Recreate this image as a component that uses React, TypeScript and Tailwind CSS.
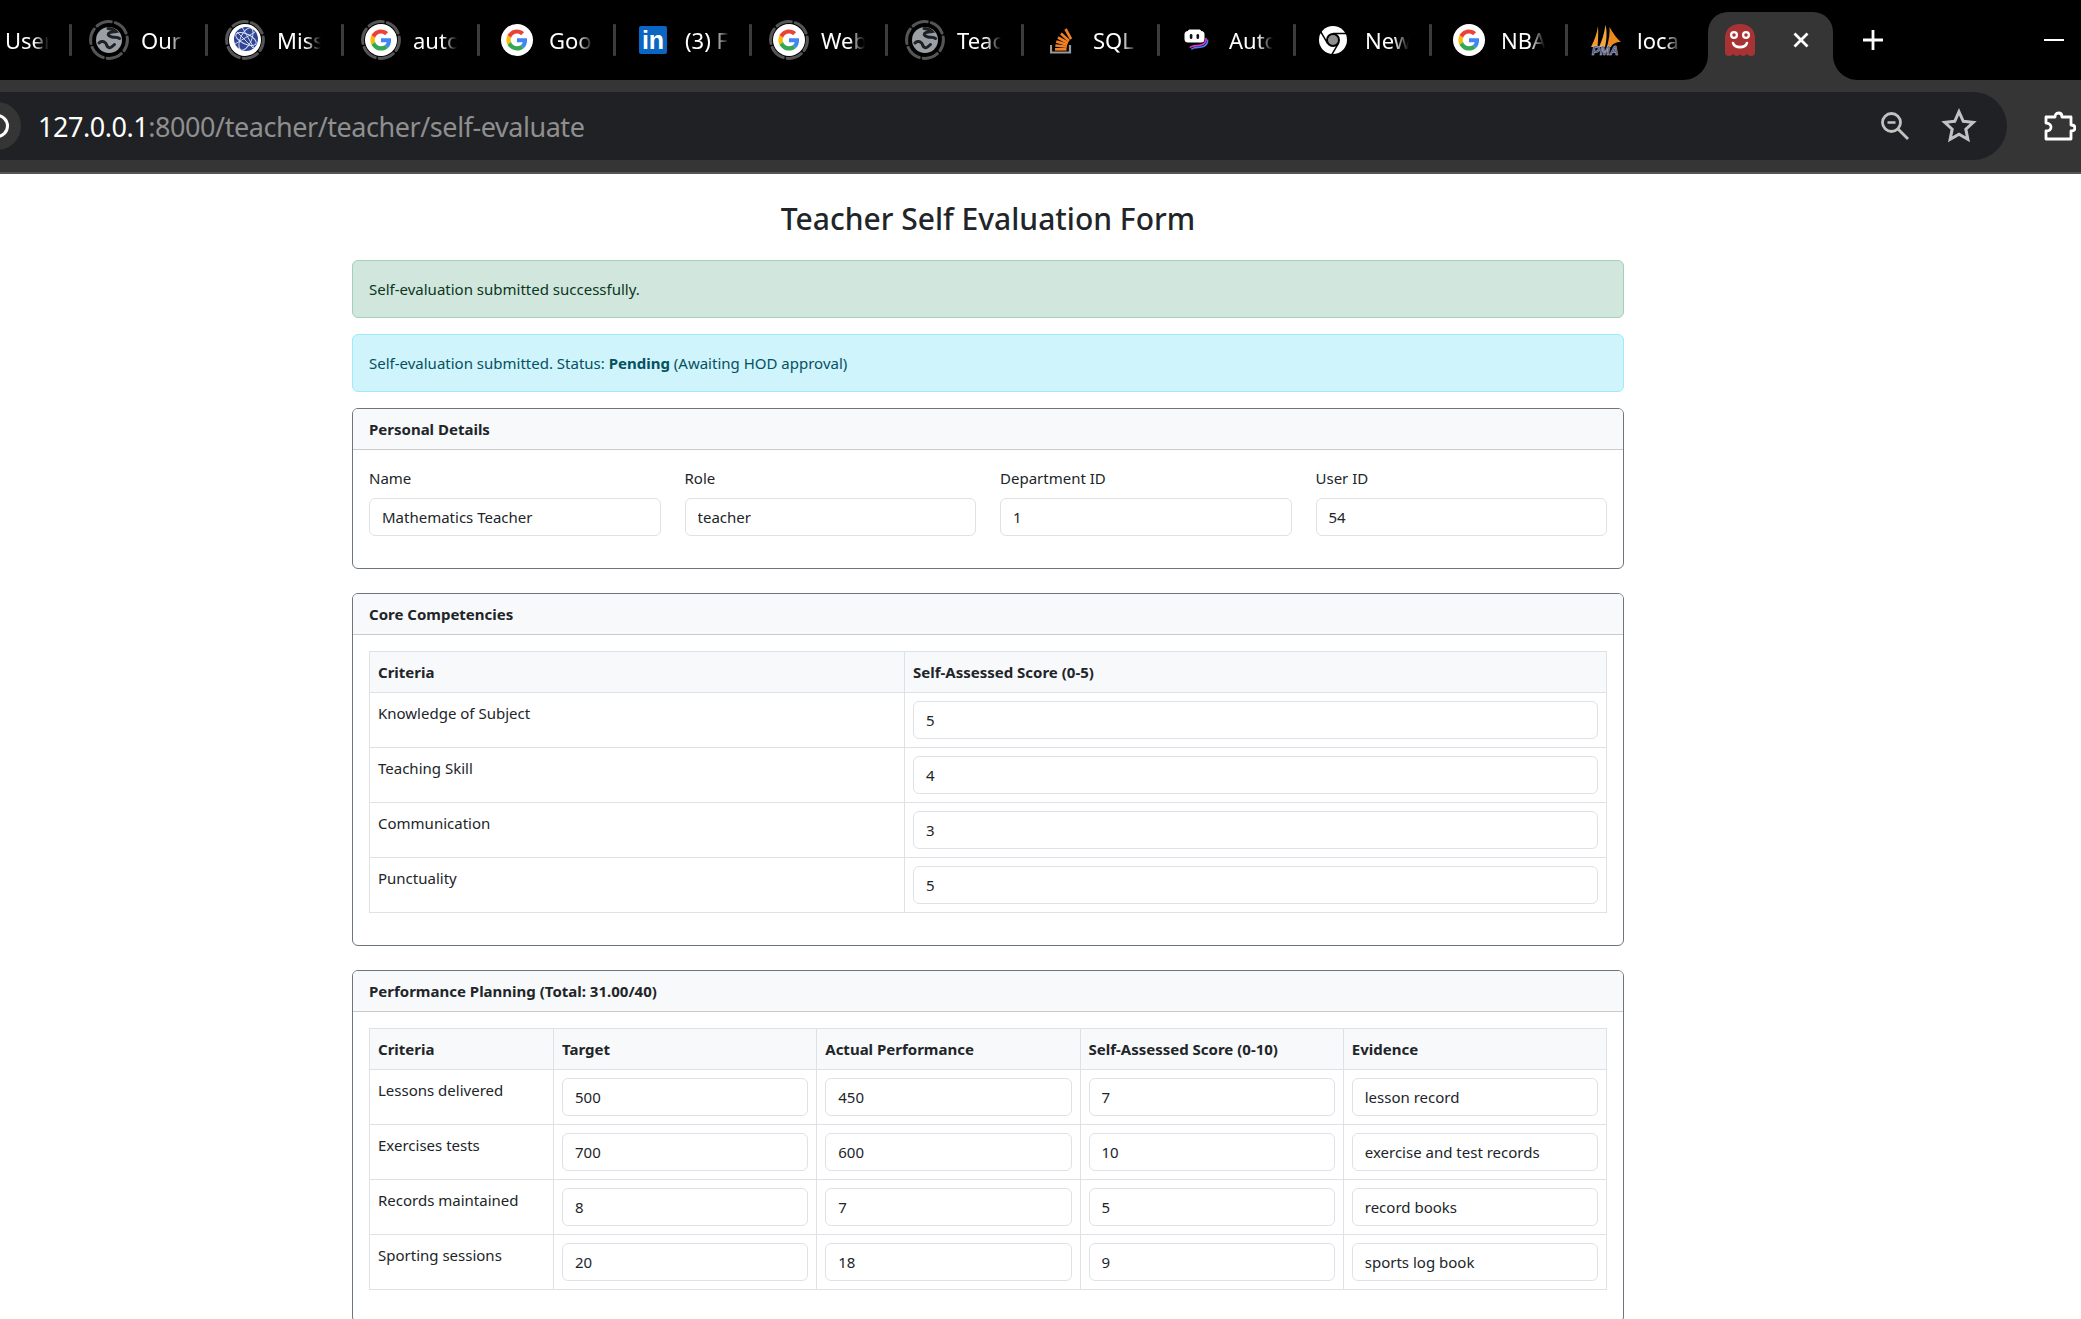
import React from "react";

function GLogo({ size = 32 }: { size?: number }) {
  return (
    <svg width={size} height={size} viewBox="0 0 32 32">
      <circle cx="16" cy="16" r="16" fill="#fff" />
      <g transform="translate(5.4 5.4) scale(0.44)">
        <path fill="#EA4335" d="M24 9.5c3.54 0 6.71 1.22 9.21 3.6l6.85-6.85C35.9 2.38 30.47 0 24 0 14.62 0 6.51 5.38 2.56 13.22l7.98 6.19C12.43 13.72 17.74 9.5 24 9.5z" />
        <path fill="#4285F4" d="M46.98 24.55c0-1.57-.15-3.09-.38-4.55H24v9.02h12.94c-.58 2.96-2.26 5.48-4.78 7.18l7.73 6c4.51-4.18 7.09-10.36 7.09-17.65z" />
        <path fill="#FBBC05" d="M10.53 28.59c-.48-1.45-.76-2.99-.76-4.59s.27-3.14.76-4.59l-7.98-6.19C.92 16.46 0 20.12 0 24c0 3.88.92 7.54 2.56 10.78l7.97-6.19z" />
        <path fill="#34A853" d="M24 48c6.48 0 11.93-2.13 16.09-5.81l-7.73-6c-2.15 1.45-4.92 2.3-8.36 2.3-6.26 0-11.57-4.22-13.47-9.91l-7.98 6.19C6.51 42.62 14.62 48 24 48z" />
      </g>
    </svg>
  );
}

function Ring({ children }: { children: React.ReactNode }) {
  return (
    <div className="relative flex h-10 w-10 items-center justify-center">
      <svg className="absolute inset-0" width="40" height="40" viewBox="0 0 40 40">
        <circle cx="20" cy="20" r="18.4" fill="none" stroke="#555" strokeWidth="3" strokeDasharray="15.3 4" strokeDashoffset="4" strokeLinecap="round" />
      </svg>
      {children}
    </div>
  );
}

function GrayGlobe() {
  return (
    <svg width="26" height="26" viewBox="0 0 26 26">
      <circle cx="13" cy="13" r="13" fill="#9aa0a6" />
      <path d="M12 1.500c3 0 6 1 8 3-2.500.5-6 .5-7.500 2-1 1.500 1 3 3.500 3.500 3 .6 5.500 0 7.500 1.500" fill="none" stroke="#202124" strokeWidth="3" strokeLinecap="round" />
      <path d="M3 16c2-2.500 5-1.500 6.500 0 1.500 1.500 1 3.500 3 4.500 2 1 4-1 6-3" fill="none" stroke="#202124" strokeWidth="3" strokeLinecap="round" />
    </svg>
  );
}

function BlueGlobe() {
  return (
    <svg width="32" height="32" viewBox="0 0 32 32">
      <circle cx="16" cy="16" r="16" fill="#fff" />
      <circle cx="17" cy="15" r="12" fill="#2f4597" />
      <g fill="none" stroke="#fff" strokeWidth="0.9" opacity="0.85">
        <ellipse cx="17" cy="15" rx="5.500" ry="12" transform="rotate(25 17 15)" />
        <ellipse cx="17" cy="15" rx="11" ry="5" transform="rotate(25 17 15)" />
        <path d="M6 20 L26 8 M8 8 L24 24 M13 3 L25 24" />
      </g>
    </svg>
  );
}

function LinkedIn() {
  return (
    <div className="flex h-7 w-7 items-end justify-center rounded-[2px] bg-[#0a66c2] text-[25px] leading-[28px] font-bold text-white font-['Liberation_Sans',sans-serif]">
      in
    </div>
  );
}

function StackIcon() {
  return (
    <svg width="22" height="28" viewBox="0 0 22 28">
      <path d="M1 19v7.500h19V19" fill="none" stroke="#9a9a9a" strokeWidth="2.200" />
      <g stroke="#f48024" strokeWidth="2.600">
        <path d="M5 23.300h11.500" />
        <path d="M5.400 19.500l11.400 1.200" />
        <path d="M6.200 15.500l11 3.300" />
        <path d="M8 11.500l10 5.500" />
        <path d="M11 7.500l8 7.500" />
        <path d="M15.500 3l5.500 10" />
      </g>
    </svg>
  );
}

function BotIcon() {
  return (
    <svg width="26" height="22" viewBox="0 0 26 22">
      <path d="M7.500 20.500c1-3 9-1.500 12-3 3-1.500 4.500-3.500 4-7" fill="none" stroke="#4b7bec" strokeWidth="1.700" />
      <path d="M6 18.800c1-3 9-1.500 12-3 3-1.500 4.500-3.500 4-7" fill="none" stroke="#d63ad0" strokeWidth="1.700" />
      <rect x="4" y="0.500" width="13" height="3" rx="1.500" fill="#fff" />
      <rect x="0.500" y="2" width="20" height="11.500" rx="3.500" fill="#fff" />
      <rect x="5.800" y="5" width="2.600" height="5" rx="1.300" fill="#111" />
      <rect x="12.500" y="5" width="2.600" height="5" rx="1.300" fill="#111" />
    </svg>
  );
}

function ChromeIcon() {
  return (
    <svg width="28" height="28" viewBox="0 0 28 28">
      <circle cx="14" cy="14" r="14" fill="#fff" />
      <g stroke="#000" strokeWidth="1.500">
        <path d="M14 7.500h14" />
        <path d="M8.400 17.200L1.400 5.200" />
        <path d="M19.600 17.200L12.600 29" />
      </g>
      <circle cx="14" cy="14" r="7" fill="#000" />
      <circle cx="14" cy="14" r="5" fill="#8f8f8f" />
    </svg>
  );
}

function PmaIcon() {
  return (
    <svg width="34" height="32" viewBox="0 0 34 32">
      <path d="M3 23 C6 17 9 10 10 2 C10.500 9 10 17 9.500 23z" fill="#f49a2a" />
      <path d="M11 23 C14 17 16 10 17.500 1 C19 6 19 15 17 23z" fill="#f6a53a" />
      <path d="M19 23 C21 15 22 9 21.500 3 C25 9 29 15 33 18 C28 18 24 20 23 23z" fill="#ee8a1c" />
      <text x="17" y="31" textAnchor="middle" fontFamily="'Liberation Sans',sans-serif" fontStyle="italic" fontWeight="700" fontSize="12" fill="#3d4a80" stroke="#c9c9d6" strokeWidth="0.5">PMA</text>
    </svg>
  );
}

function GhostIcon() {
  return (
    <svg width="30" height="32" viewBox="0 0 30 32">
      <path d="M0 14C0 5.500 6 0 15 0s15 5.500 15 14v14c0 3-2 4-3.800 4-2 0-3.200-1-4.200-2.300-1 1.300-2.400 2.300-4 2.300-1.300 0-2.500-1-3-2-.5 1-1.700 2-3 2-1.600 0-3-1-4-2.300C7 31 5.800 32 3.800 32 2 32 0 31 0 28z" fill="#a93235" />
      <circle cx="9" cy="11" r="4" fill="#fff" />
      <circle cx="21" cy="11" r="4" fill="#fff" />
      <circle cx="9" cy="11" r="1.800" fill="#a93235" />
      <circle cx="21" cy="11" r="1.800" fill="#a93235" />
      <path d="M8 19c2 5.500 12 5.500 14 0" fill="none" stroke="#fff" strokeWidth="2.600" strokeLinecap="round" />
    </svg>
  );
}

type TabDef = { label: string; icon: React.ReactNode };

const tabs: TabDef[] = [
  { label: "Our", icon: <Ring><GrayGlobe /></Ring> },
  { label: "Miss", icon: <Ring><BlueGlobe /></Ring> },
  { label: "auto", icon: <Ring><GLogo /></Ring> },
  { label: "Goo", icon: <GLogo /> },
  { label: "(3) F", icon: <LinkedIn /> },
  { label: "Web", icon: <Ring><GLogo /></Ring> },
  { label: "Teac", icon: <Ring><GrayGlobe /></Ring> },
  { label: "SQL", icon: <StackIcon /> },
  { label: "Auto", icon: <BotIcon /> },
  { label: "New", icon: <ChromeIcon /> },
  { label: "NBA", icon: <GLogo /> },
];

function Sep() {
  return <div className="h-8 w-[3px] shrink-0 rounded-[1px] bg-[#3c3c3c]" />;
}

function TabLabel({ children, first }: { children: React.ReactNode; first?: boolean }) {
  return (
    <span
      className={
        first
          ? "w-[44px] overflow-hidden whitespace-nowrap text-[22px] text-white [mask-image:linear-gradient(to_right,black_65%,transparent)]"
          : "ml-[12px] w-[44px] overflow-hidden whitespace-nowrap text-[22px] text-white [mask-image:linear-gradient(to_right,black_65%,transparent)]"
      }
    >
      {children}
    </span>
  );
}

function ChromeBar() {
  return (
    <div className="font-['Noto_Sans',sans-serif]">
      <div className="flex h-[80px] items-center overflow-hidden bg-black">
        <div className="flex h-full w-[69px] shrink-0 items-center pl-[5px]">
          <TabLabel first>User</TabLabel>
        </div>
        <Sep />
        {tabs.map((t) => (
          <React.Fragment key={t.label}>
            <div className="flex h-full w-[133px] shrink-0 items-center">
              <div className="ml-[17px] flex w-[40px] shrink-0 justify-center">{t.icon}</div>
              <TabLabel>{t.label}</TabLabel>
            </div>
            <Sep />
          </React.Fragment>
        ))}
        <div className="flex h-full w-[140px] shrink-0 items-center">
          <div className="ml-[17px] flex w-[40px] shrink-0 justify-center"><PmaIcon /></div>
          <TabLabel>loca</TabLabel>
        </div>
        <div className="relative mt-[12px] flex h-[68px] w-[125px] shrink-0 items-start rounded-t-[20px] bg-[#353535]">
          <svg className="absolute -left-[25px] bottom-0" width="25" height="25" viewBox="0 0 25 25">
            <path d="M25 0v25H0C14 25 25 14 25 0z" fill="#353535" />
          </svg>
          <svg className="absolute -right-[25px] bottom-0" width="25" height="25" viewBox="0 0 25 25">
            <path d="M0 0v25h25C11 25 0 14 0 0z" fill="#353535" />
          </svg>
          <div className="ml-[17px] mt-[12px]"><GhostIcon /></div>
          <svg className="ml-[38px] mt-[20px]" width="16" height="16" viewBox="0 0 16 16">
            <path d="M1.500 1.500l13 13M14.500 1.500l-13 13" stroke="#fff" strokeWidth="2.800" />
          </svg>
        </div>
        <svg className="ml-[29px] shrink-0" width="22" height="22" viewBox="0 0 22 22">
          <path d="M11 1v20M1 11h20" stroke="#fff" strokeWidth="2.800" />
        </svg>
        <div className="ml-auto mr-[17px] h-[2px] w-[20px] bg-white" />
      </div>
      <div className="box-content flex h-[92px] items-center border-b-2 border-[#555] bg-[#353535]">
        <div className="ml-[-34px] flex h-[68px] w-[2040.7px] shrink-0 items-center rounded-full bg-[#202124]">
          <div className="ml-[7px] flex h-[48px] w-[48px] shrink-0 items-center justify-center rounded-full bg-[#353535]">
            <div className="h-[24px] w-[24px] rounded-full border-[3px] border-white" />
          </div>
          <span className="ml-[17px] text-[27px] leading-none tracking-[-0.45px] whitespace-nowrap text-white">
            127.0.0.1<span className="text-[#8f8f8f]">:8000/teacher/teacher/self-evaluate</span>
          </span>
          <svg className="ml-auto shrink-0" width="30" height="30" viewBox="0 0 30 30">
            <circle cx="11.500" cy="11.500" r="9" fill="none" stroke="#c2c2c2" strokeWidth="2.800" />
            <path d="M7.500 11.500h8" stroke="#c2c2c2" strokeWidth="2.500" />
            <path d="M18 18l10 10" stroke="#c2c2c2" strokeWidth="2.800" />
          </svg>
          <svg className="ml-[30px] mr-[29px] shrink-0" width="38" height="38" viewBox="0 0 24 24">
            <path d="M12 3l2.700 6 6.300.7-4.700 4.300 1.300 6.400L12 17.200l-5.600 3.200 1.300-6.400L3 9.700 9.300 9z" fill="none" stroke="#c2c2c2" strokeWidth="1.900" strokeLinejoin="miter" />
          </svg>
        </div>
        <svg className="ml-[37px] shrink-0" width="32" height="32" viewBox="0 0 32 32">
          <path d="M2 7h9c0-2 1-4 3.500-4S18 5 18 7h9v8c2 0 4 .8 4 3s-2 3-4 3v8H2v-8c4 0 5-2 5-4s-2-4-5-4z" fill="none" stroke="#fff" strokeWidth="2.800" strokeLinejoin="round" />
        </svg>
      </div>
    </div>
  );
}

function Field({ label, value }: { label: string; value: string }) {
  return (
    <div>
      <label className="mb-2 block leading-6">{label}</label>
      <TextInput value={value} />
    </div>
  );
}

function TextInput({ value }: { value: string }) {
  return (
    <input
      readOnly
      value={value}
      className="block h-[38px] w-full rounded-[6px] border border-[#dee2e6] bg-white px-3 text-[#212529] outline-none"
    />
  );
}

function Card({ title, children }: { title: string; children: React.ReactNode }) {
  return (
    <section className="mb-6 rounded-[6px] border border-[#6c757d] bg-white">
      <div className="rounded-t-[5px] border-b border-[#c9cacb] bg-[#f8f9fa] px-4 py-2 leading-6 font-bold">
        {title}
      </div>
      <div className="p-4">{children}</div>
    </section>
  );
}

const th = "border border-[#dee2e6] bg-[#f8f9fa] p-2 text-left leading-6 font-bold";
const td = "border border-[#dee2e6] p-2 align-top leading-6 text-[#212529]";

const core: [string, string][] = [
  ["Knowledge of Subject", "5"],
  ["Teaching Skill", "4"],
  ["Communication", "3"],
  ["Punctuality", "5"],
];

const perf: string[][] = [
  ["Lessons delivered", "500", "450", "7", "lesson record"],
  ["Exercises tests", "700", "600", "10", "exercise and test records"],
  ["Records maintained", "8", "7", "5", "record books"],
  ["Sporting sessions", "20", "18", "9", "sports log book"],
];

export default function App() {
  return (
    <div className="h-screen overflow-hidden bg-white">
      <ChromeBar />
      <main className="ml-[352px] w-[1272px] pt-[26px] font-['Noto_Sans',sans-serif] text-[15px] text-[#212529]">
        <h2 className="mb-[22px] text-center text-[30px] leading-[38.4px] font-medium">Teacher Self Evaluation Form</h2>

        <div className="mb-4 rounded-[6px] border border-[#a3cfbb] bg-[#d1e7dd] p-4 leading-6 text-[#0a3622]">
          Self-evaluation submitted successfully.
        </div>
        <div className="mb-4 rounded-[6px] border border-[#9eeaf9] bg-[#cff4fc] p-4 leading-6 text-[#055160]">
          Self-evaluation submitted. Status: <strong className="font-bold">Pending</strong> (Awaiting HOD approval)
        </div>

        <Card title="Personal Details">
          <div className="mb-4 grid grid-cols-4 gap-6">
            <Field label="Name" value="Mathematics Teacher" />
            <Field label="Role" value="teacher" />
            <Field label="Department ID" value="1" />
            <Field label="User ID" value="54" />
          </div>
        </Card>

        <Card title="Core Competencies">
          <table className="mb-4 w-full table-fixed border-collapse">
            <colgroup>
              <col className="w-[535px]" />
              <col />
            </colgroup>
            <thead>
              <tr>
                <th className={th}>Criteria</th>
                <th className={th}>Self-Assessed Score (0-5)</th>
              </tr>
            </thead>
            <tbody>
              {core.map(([c, v]) => (
                <tr key={c}>
                  <td className={td}>{c}</td>
                  <td className={td}><TextInput value={v} /></td>
                </tr>
              ))}
            </tbody>
          </table>
        </Card>

        <Card title="Performance Planning (Total: 31.00/40)">
          <table className="mb-4 w-full table-fixed border-collapse">
            <colgroup>
              <col className="w-[184px]" />
              <col />
              <col />
              <col />
              <col />
            </colgroup>
            <thead>
              <tr>
                <th className={th}>Criteria</th>
                <th className={th}>Target</th>
                <th className={th}>Actual Performance</th>
                <th className={th}>Self-Assessed Score (0-10)</th>
                <th className={th}>Evidence</th>
              </tr>
            </thead>
            <tbody>
              {perf.map((r) => (
                <tr key={r[0]}>
                  <td className={td}>{r[0]}</td>
                  {r.slice(1).map((v, i) => (
                    <td key={i} className={td}><TextInput value={v} /></td>
                  ))}
                </tr>
              ))}
            </tbody>
          </table>
        </Card>
      </main>
    </div>
  );
}
